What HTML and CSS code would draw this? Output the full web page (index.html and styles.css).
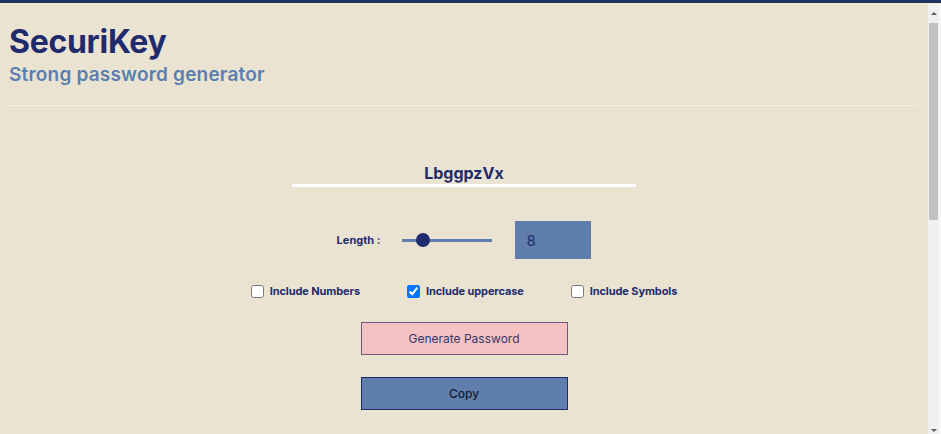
FILE: index.html
```html
<!DOCTYPE html>
<html lang="en">
<head>
<meta charset="utf-8">
<title>SecuriKey</title>
<link rel="stylesheet" href="styles.css">
</head>
<body>
<div class="topbar"></div>
<div class="window">
  <div class="viewport">
    <header class="header">
      <h1 class="title">SecuriKey</h1>
      <p class="subtitle">Strong password generator</p>
    </header>
    <hr class="divider">
    <main class="generator">
      <div class="output">LbggpzVx</div>
      <div class="length-row">
        <label class="label" for="len">Length :</label>
        <input class="slider" id="len" type="range" min="1" max="40" value="8">
        <input class="number" type="text" value="8">
      </div>
      <div class="options">
        <label class="option"><input type="checkbox"><span>Include Numbers</span></label>
        <label class="option"><input type="checkbox" checked><span>Include uppercase</span></label>
        <label class="option"><input type="checkbox"><span>Include Symbols</span></label>
      </div>
      <button class="btn btn-generate">Generate Password</button>
      <button class="btn btn-copy">Copy</button>
    </main>
  </div>
  <div class="scrollbar" aria-hidden="true">
    <div class="arrow arrow-up"></div>
    <div class="track"><div class="thumb"></div></div>
    <div class="arrow arrow-down"></div>
  </div>
</div>
</body>
</html>
```

FILE: styles.css
```css
html, body {
  margin: 0;
  padding: 0;
  height: 100%;
  overflow: hidden;
}
body {
  display: flex;
  flex-direction: column;
  background: #eae3d2;
  font-family: "Inter", "Liberation Sans", sans-serif;
  color: #1f2b6c;
}
.topbar {
  flex: 0 0 3px;
  background: #1c3461;
  border-bottom: 1px solid #f3e4c6;
}
.window {
  flex: 1 1 auto;
  min-height: 0;
  display: flex;
}
.viewport {
  flex: 1 1 auto;
  overflow: hidden;
}
.scrollbar {
  flex: 0 0 13px;
  display: flex;
  flex-direction: column;
  background: #f0f0f0;
  border-right: 2px solid #f7f7f7;
  box-sizing: border-box;
}
.arrow {
  flex: 0 0 18px;
  display: flex;
  justify-content: center;
  align-items: center;
}
.arrow::before {
  content: "";
  width: 0;
  height: 0;
  border-left: 3px solid transparent;
  border-right: 3px solid transparent;
}
.arrow-up::before {
  border-bottom: 3px solid #5a5a5a;
}
.arrow-down {
  align-items: flex-end;
  padding-bottom: 2px;
}
.arrow-down::before {
  border-top: 3px solid #5a5a5a;
}
.track {
  flex: 1 1 auto;
  padding: 1px 1px 0 1px;
}
.thumb {
  width: 9px;
  height: 197px;
  background: #c1c1c1;
}
.header {
  padding: 0 9px;
}
.title {
  margin: 18px 0 0;
  font-size: 32px;
  line-height: 40px;
  font-weight: 700;
  color: #1f2b6c;
  letter-spacing: -0.3px;
}
.subtitle {
  margin: 1px 0 0;
  font-size: 19px;
  line-height: 24px;
  font-weight: 600;
  color: #5b7fb0;
  letter-spacing: 0.2px;
}
.divider {
  margin: 18px 10px 0 9px;
  border: 0;
  height: 1px;
  background: #f7efe3;
}
.generator {
  display: flex;
  flex-direction: column;
  align-items: center;
  padding-top: 56px;
}
.output {
  width: 344px;
  text-align: center;
  font-size: 16px;
  line-height: 22px;
  font-weight: 700;
  padding-bottom: 0;
  border-bottom: 3px solid #ffffff;
}
.length-row {
  display: flex;
  align-items: center;
  margin-top: 34px;
}
.label {
  font-size: 11px;
  font-weight: 700;
}
.slider {
  -webkit-appearance: none;
  appearance: none;
  width: 90px;
  height: 3px;
  margin: 0 23px 0 22px;
  background: #5f7eab;
  outline: none;
}
.slider::-webkit-slider-thumb {
  -webkit-appearance: none;
  appearance: none;
  width: 14px;
  height: 14px;
  border-radius: 50%;
  background: #1f2b6c;
}
.number {
  width: 76px;
  height: 38px;
  box-sizing: border-box;
  border: 0;
  padding: 0 11px;
  background: #5f7eab;
  font-family: inherit;
  font-size: 15px;
  color: #1f2b6c;
}
.options {
  display: flex;
  gap: 47px;
  margin-top: 25px;
}
.option {
  display: flex;
  align-items: center;
  font-size: 11px;
  font-weight: 700;
  letter-spacing: -0.1px;
}
.option input {
  margin: 0 6px 0 0;
  width: 13px;
  height: 13px;
}
.btn {
  width: 207px;
  height: 33px;
  font-family: inherit;
  font-size: 12px;
  cursor: pointer;
}
.btn-generate {
  margin-top: 24px;
  background: #f4c2c2;
  border: 1px solid #6e5b7e;
  color: #34386a;
}
.btn-copy {
  margin-top: 22px;
  background: #5f7eab;
  border: 1px solid #1f2b6c;
  color: #161a30;
  font-weight: 500;
}
```
